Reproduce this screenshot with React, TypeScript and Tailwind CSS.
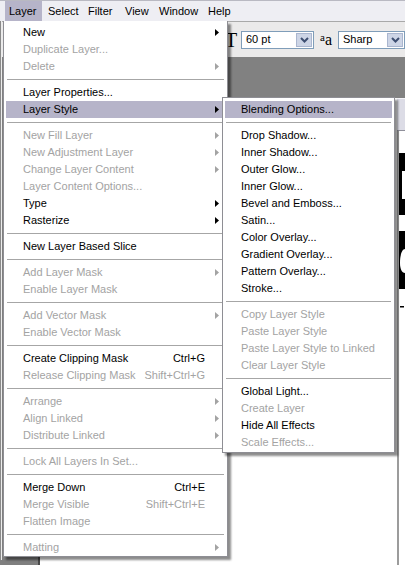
import React from "react";

type Item =
  | "sep"
  | { t: string; dis?: boolean; arrow?: boolean; hl?: boolean; sc?: string };

const mainItems: Item[] = [
  { t: "New", arrow: true },
  { t: "Duplicate Layer...", dis: true },
  { t: "Delete", dis: true, arrow: true },
  "sep",
  { t: "Layer Properties..." },
  { t: "Layer Style", arrow: true, hl: true },
  "sep",
  { t: "New Fill Layer", dis: true, arrow: true },
  { t: "New Adjustment Layer", dis: true, arrow: true },
  { t: "Change Layer Content", dis: true, arrow: true },
  { t: "Layer Content Options...", dis: true },
  { t: "Type", arrow: true },
  { t: "Rasterize", arrow: true },
  "sep",
  { t: "New Layer Based Slice" },
  "sep",
  { t: "Add Layer Mask", dis: true, arrow: true },
  { t: "Enable Layer Mask", dis: true },
  "sep",
  { t: "Add Vector Mask", dis: true, arrow: true },
  { t: "Enable Vector Mask", dis: true },
  "sep",
  { t: "Create Clipping Mask", sc: "Ctrl+G" },
  { t: "Release Clipping Mask", dis: true, sc: "Shift+Ctrl+G" },
  "sep",
  { t: "Arrange", dis: true, arrow: true },
  { t: "Align Linked", dis: true, arrow: true },
  { t: "Distribute Linked", dis: true, arrow: true },
  "sep",
  { t: "Lock All Layers In Set...", dis: true },
  "sep",
  { t: "Merge Down", sc: "Ctrl+E" },
  { t: "Merge Visible", dis: true, sc: "Shift+Ctrl+E" },
  { t: "Flatten Image", dis: true },
  "sep",
  { t: "Matting", dis: true, arrow: true },
];

const subItems: Item[] = [
  { t: "Blending Options...", hl: true },
  "sep",
  { t: "Drop Shadow..." },
  { t: "Inner Shadow..." },
  { t: "Outer Glow..." },
  { t: "Inner Glow..." },
  { t: "Bevel and Emboss..." },
  { t: "Satin..." },
  { t: "Color Overlay..." },
  { t: "Gradient Overlay..." },
  { t: "Pattern Overlay..." },
  { t: "Stroke..." },
  "sep",
  { t: "Copy Layer Style", dis: true },
  { t: "Paste Layer Style", dis: true },
  { t: "Paste Layer Style to Linked", dis: true },
  { t: "Clear Layer Style", dis: true },
  "sep",
  { t: "Global Light..." },
  { t: "Create Layer", dis: true },
  { t: "Hide All Effects" },
  { t: "Scale Effects...", dis: true },
];

function Arrow({ dis }: { dis?: boolean }) {
  return (
    <svg width="4" height="7" viewBox="0 0 4 7" className="mr-[6px] shrink-0">
      <polygon points="0,0 4,3.5 0,7" fill={dis ? "#a3a3a3" : "#000000"} />
    </svg>
  );
}

function MenuList({ items, pl }: { items: Item[]; pl: "main" | "sub" }) {
  return (
    <>
      {items.map((it, i) => {
        if (it === "sep") {
          return (
            <div key={i} className="h-[9px] flex items-center">
              <div className="mx-[1px] h-px flex-1 bg-[#a6a6a6]" />
            </div>
          );
        }
        return (
          <div
            key={i}
            className={`h-[17px] flex items-center whitespace-nowrap ${
              it.hl ? "bg-[#b6b4c9]" : ""
            } ${it.dis ? "text-[#a3a3a3]" : "text-black"}`}
          >
            <span className={`flex-1 ${pl === "main" ? "pl-[17px]" : "pl-[16px]"}`}>{it.t}</span>
            {it.sc && <span className="mr-[20px]">{it.sc}</span>}
            {it.arrow && <Arrow dis={it.dis} />}
          </div>
        );
      })}
    </>
  );
}

function Chevron() {
  return (
    <svg width="9" height="6" viewBox="0 0 9 6">
      <polyline points="1,1 4.5,4.5 8,1" fill="none" stroke="#3e4f72" strokeWidth="2" />
    </svg>
  );
}

function Combo({ w, text }: { w: string; text: string }) {
  return (
    <div className={`${w} h-[18px] flex items-center border border-[#7f9db9] bg-white`}>
      <span className="flex-1 pl-[4px] text-[11px] text-black">{text}</span>
      <div className="w-[16px] h-[14px] mr-[1px] flex items-center justify-center bg-[#cdd5e6] border border-[#aab6cf]">
        <Chevron />
      </div>
    </div>
  );
}

export default function App() {
  const bar = [
    { t: "Layer", w: "w-[37px]", pl: "pl-[4px]", on: true },
    { t: "Select", w: "w-[41px]", pl: "pl-[6px]" },
    { t: "Filter", w: "w-[36px]", pl: "pl-[5px]" },
    { t: "View", w: "w-[35px]", pl: "pl-[6px]" },
    { t: "Window", w: "w-[49px]", pl: "pl-[5px]" },
    { t: "Help", w: "w-[30px]", pl: "pl-[5px]" },
  ];
  return (
    <div className="relative w-[405px] h-[565px] overflow-hidden bg-white font-['Liberation_Sans',Arial,sans-serif] text-[11px] leading-none">
      {/* menu bar */}
      <div className="h-[21px] flex border-t border-[#b9b9c2] bg-[#eeeef3] pl-[5px]">
        {bar.map((b) => (
          <div
            key={b.t}
            className={`${b.w} ${b.pl} h-full flex items-center text-black ${b.on ? "bg-[#b6b4c9]" : ""}`}
          >
            {b.t}
          </div>
        ))}
      </div>

      {/* body */}
      <div className="flex h-[544px]">
        <div className="w-[3px] flex flex-col bg-[#808080]">
          <div className="h-[539px] bg-[#ececec] border-l border-[#8a8a8a]" />
        </div>
        <div className="flex-1 flex flex-col">
          {/* options toolbar */}
          <div className="h-[36px] flex items-center border-t border-[#a9a9a9] bg-[#ebeaea]">
            <span className="ml-[223px] w-[14px] text-[20px] font-['Liberation_Serif',serif] text-black">T</span>
            <div className="ml-[2px]">
              <Combo w="w-[73px]" text="60 pt" />
            </div>
            <span className="ml-[6px] w-[18px] flex items-end font-['Liberation_Serif',serif] text-black">
              <span className="text-[11px] mb-[5px]">a</span>
              <span className="text-[16px]">a</span>
            </span>
            <Combo w="w-[67px]" text="Sharp" />
          </div>
          {/* dark workspace band */}
          <div className="h-[41px] bg-[#818181]" />
          {/* lower area */}
          <div className="flex-1 flex">
            <div className="w-[38px] bg-[#7f7f7f] border-r-2 border-[#4a4a4a]" />
            <div className="flex-1 bg-white" />
            <div className="w-[8px] flex flex-col bg-white">
              <div className="h-[33px] bg-[#dcdce6] border-t border-[#f4f4f8] border-b border-b-[#8f8f9a]" />
              <div className="flex-1 border-l-2 border-[#9c9c9c] bg-white">
                <svg width="6" height="200" viewBox="0 0 6 200" className="block">
                  <path d="M0 22 H6 V40 H3 V68 H6 V84 H0 Z" fill="#000" />
                  <path d="M0 100 H6 V118 C3 118 1 124 1 132 C1 138 3 142 6 142 V158 H0 Z" fill="#000" />
                  <rect x="1" y="175" width="4" height="1.5" fill="#000" />
                </svg>
              </div>
            </div>
          </div>
        </div>
      </div>

      {/* main menu */}
      <div className="absolute left-[3px] top-[21px] w-[225px] bg-white border-l border-r border-b border-[#8e8e94] pt-[3px] px-[2px] shadow-[3px_3px_2px_rgba(0,0,0,0.45)]">
        <MenuList items={mainItems} pl="main" />
      </div>

      {/* submenu */}
      <div className="absolute left-[222px] top-[97px] w-[173px] bg-white border border-[#8e8e94] pt-[3px] pb-[1px] px-[2px] shadow-[3px_3px_2px_rgba(0,0,0,0.45)]">
        <MenuList items={subItems} pl="sub" />
      </div>
    </div>
  );
}
